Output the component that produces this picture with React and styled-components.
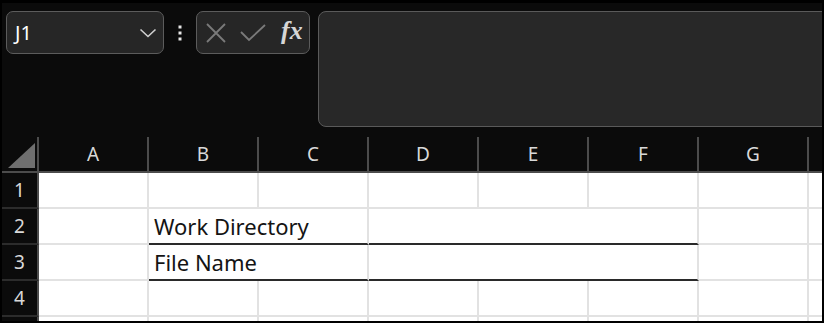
import React from "react";
import styled, { createGlobalStyle } from "styled-components";

const GlobalStyle = createGlobalStyle`
  html, body {
    margin: 0;
    padding: 0;
    background: #000;
  }
  body {
    font-family: "Noto Sans", "Open Sans", sans-serif;
  }
`;

const Frame = styled.div`
  width: 824px;
  height: 323px;
  box-sizing: border-box;
  border: 2px solid #000;
  border-top-width: 3px;
  background: #0b0b0b;
  overflow: hidden;
  display: flex;
  flex-direction: column;
`;

const Toolbar = styled.div`
  display: flex;
  align-items: flex-start;
  padding: 8px 0 0 4px;
  height: 116px;
  flex-shrink: 0;
`;

const Pill = styled.div`
  box-sizing: border-box;
  height: 43px;
  border: 1.5px solid #5c5c5c;
  border-radius: 7px;
  background: #262626;
  display: flex;
  align-items: center;
  flex-shrink: 0;
`;

const NameBox = styled(Pill)`
  width: 158px;
  justify-content: space-between;
  padding: 0 6px 0 8px;
  color: #fff;
  font-size: 20px;
  line-height: 1;
`;

const Dots = styled.div`
  width: 32px;
  height: 43px;
  display: flex;
  align-items: center;
  justify-content: center;
  flex-shrink: 0;
`;

const Buttons = styled(Pill)`
  width: 114px;
  padding-left: 9px;
  gap: 14px;
`;

const Fx = styled.span`
  font-family: "Liberation Serif", "DejaVu Serif", serif;
  font-style: italic;
  font-weight: bold;
  font-size: 26px;
  line-height: 1;
  color: #d6d6d6;
  margin-left: 1px;
  margin-top: -4px;
`;

const FormulaBar = styled.div`
  flex: 1;
  margin-left: 8px;
  margin-right: -14px;
  height: 116px;
  box-sizing: border-box;
  border: 1.5px solid #5a5a5a;
  border-radius: 8px;
  background: #282828;
`;

const Sheet = styled.div`
  margin-top: 10px;
  display: flex;
  flex-direction: column;
`;

const Row = styled.div`
  display: flex;
  height: 36px;
  flex-shrink: 0;
`;

const Corner = styled.div`
  width: 37px;
  box-sizing: border-box;
  border-right: 2px solid #4c4c4c;
  border-bottom: 2px solid #4c4c4c;
  display: flex;
  align-items: flex-end;
  justify-content: flex-end;
  padding: 0 2px 3px 0;
  flex-shrink: 0;
`;

const ColHead = styled.div`
  width: 110px;
  box-sizing: border-box;
  border-right: 2px solid #4c4c4c;
  border-bottom: 2px solid #4c4c4c;
  color: #d9d9d9;
  font-size: 19px;
  line-height: 1;
  display: flex;
  align-items: center;
  justify-content: center;
  flex-shrink: 0;
`;

const RowHead = styled.div`
  width: 37px;
  box-sizing: border-box;
  border-right: 2px solid #4c4c4c;
  border-bottom: 2px solid #2c2c2c;
  color: #d9d9d9;
  font-size: 19px;
  line-height: 1;
  display: flex;
  align-items: center;
  justify-content: center;
  flex-shrink: 0;
`;

const Cell = styled.div`
  width: ${(p) => p.$span * 110}px;
  box-sizing: border-box;
  background: #fff;
  border-right: 2px solid #e2e2e2;
  border-bottom: 2px solid ${(p) => (p.$underline ? "#2a2a2a" : "#e2e2e2")};
  padding: 0 5px;
  color: #141414;
  font-size: 22px;
  line-height: 1;
  display: flex;
  align-items: center;
  white-space: nowrap;
  flex-shrink: 0;
`;

const columns = ["A", "B", "C", "D", "E", "F", "G", "H"];

const plain = columns.map(() => ({ span: 1 }));

const labelRow = (text) => [
  { span: 1 },
  { span: 2, text, underline: true },
  { span: 3, underline: true },
  { span: 1 },
  { span: 1 },
];

// row 5 is only a sliver at the bottom edge, its number is not visible
const rows = [
  { n: 1, label: "1", cells: plain },
  { n: 2, label: "2", cells: labelRow("Work Directory") },
  { n: 3, label: "3", cells: labelRow("File Name") },
  { n: 4, label: "4", cells: plain },
  { n: 5, label: "", cells: plain },
];

const Chevron = () => (
  <svg width="18" height="10" viewBox="0 0 18 10">
    <path d="M1.5 1.5 L9 8.5 L16.5 1.5" fill="none" stroke="#d0d0d0" strokeWidth="1.6" />
  </svg>
);

const VDots = () => (
  <svg width="4" height="16" viewBox="0 0 4 16">
    <rect x="0.5" y="0.5" width="3" height="3" fill="#e6e6e6" />
    <rect x="0.5" y="6.5" width="3" height="3" fill="#e6e6e6" />
    <rect x="0.5" y="12.5" width="3" height="3" fill="#e6e6e6" />
  </svg>
);

const Cancel = () => (
  <svg width="20" height="20" viewBox="0 0 20 20">
    <path d="M1 1 L19 19 M19 1 L1 19" stroke="#7a7a7a" strokeWidth="1.8" />
  </svg>
);

const Enter = () => (
  <svg width="26" height="18" viewBox="0 0 26 18">
    <path d="M1 8 L9 16 L25 1" fill="none" stroke="#7a7a7a" strokeWidth="1.8" />
  </svg>
);

const SelectAll = () => (
  <svg width="27" height="25" viewBox="0 0 27 25">
    <polygon points="27,0 27,25 0,25" fill="#6f6f6f" />
  </svg>
);

export default function App() {
  return (
    <>
      <GlobalStyle />
      <Frame>
        <Toolbar>
          <NameBox>
            <span>J1</span>
            <Chevron />
          </NameBox>
          <Dots>
            <VDots />
          </Dots>
          <Buttons>
            <Cancel />
            <Enter />
            <Fx>fx</Fx>
          </Buttons>
          <FormulaBar />
        </Toolbar>
        <Sheet>
          <Row>
            <Corner>
              <SelectAll />
            </Corner>
            {columns.map((c) => (
              <ColHead key={c}>{c === "H" ? "" : c}</ColHead>
            ))}
          </Row>
          {rows.map((r) => (
            <Row key={r.n}>
              <RowHead>{r.label}</RowHead>
              {r.cells.map((cell, i) => (
                <Cell key={i} $span={cell.span} $underline={cell.underline}>
                  {cell.text}
                </Cell>
              ))}
            </Row>
          ))}
        </Sheet>
      </Frame>
    </>
  );
}
